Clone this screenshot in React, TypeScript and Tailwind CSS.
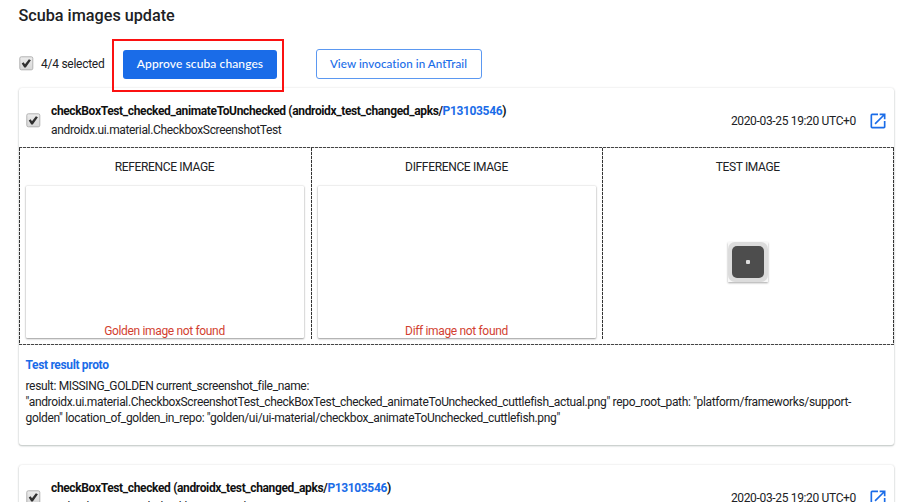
import React from "react";

function Checkbox() {
  return (
    <svg className="block h-[15px] w-[15px] shrink-0" viewBox="0 0 15 15">
      <defs>
        <linearGradient id="face" x1="0" y1="0" x2="0" y2="1">
          <stop offset="0" stopColor="#ececec" />
          <stop offset="1" stopColor="#d8d8d8" />
        </linearGradient>
      </defs>
      <rect x="0.8" y="0.8" width="13" height="13" rx="1.5" fill="url(#face)" stroke="#b2b2b2" />
      <path d="M2.7 7.6 L4.6 6.3 L6 8.2 L9.9 3.3 L11.9 4.3 L6.8 11.4 L5.3 11.4 Z" fill="#303030" />
    </svg>
  );
}

function OpenIcon() {
  return (
    <svg className="block h-5 w-5 shrink-0" viewBox="0 0 24 24" fill="#1a6ce8">
      <path d="M19 19H5V5h7V3H5a2 2 0 0 0-2 2v14a2 2 0 0 0 2 2h14c1.1 0 2-.9 2-2v-7h-2v7zM14 3v2h3.59l-9.83 9.83 1.41 1.41L19 6.41V10h2V3h-7z" />
    </svg>
  );
}

function CardHeader({ name }: { name: string }) {
  return (
    <div className="flex h-[59px] shrink-0 items-start">
      <div className="pl-[7px] pt-[25px]">
        <Checkbox />
      </div>
      <div className="pl-[10.5px] pt-[13px] leading-[20px] whitespace-nowrap">
        <div className="font-bold h-[19px] tracking-[-0.36px] text-[#111]">
          <span>{name} (androidx_test_changed_apks/</span>
          <span className="text-[#1a6ce8]">P13103546</span>
          <span>)</span>
        </div>
        <div>androidx.ui.material.CheckboxScreenshotTest</div>
      </div>
      <div className="ml-auto flex items-center gap-[12px] pr-[6px] pt-[23px]">
        <span className="leading-5 whitespace-nowrap">2020-03-25 19:20 UTC+0</span>
        <OpenIcon />
      </div>
    </div>
  );
}

const dashH = "h-px shrink-0 bg-[repeating-linear-gradient(90deg,#444_0_2.7px,#ddd_2.7px_4px)]";
const dashV = "w-px shrink-0 bg-[repeating-linear-gradient(180deg,#333_0_2.7px,#ddd_2.7px_4px)]";
const card =
  "ml-[18.5px] w-[875.5px] rounded-[3px] bg-white shadow-[0_1px_1px_#cdd2d0,0_1px_2px_rgba(60,64,67,0.25),0_0_2px_rgba(60,64,67,0.15)]";

function EmptyImage({ title, message }: { title: string; message: string }) {
  return (
    <div className="flex w-[290px] shrink-0 flex-col px-[6px]">
      <div className="h-[38px] pt-[9px] text-center leading-5">{title}</div>
      <div className="flex h-[152px] items-end justify-center rounded-[1px] shadow-[0_1px_2px_rgba(0,0,0,0.35),0_0_2px_rgba(0,0,0,0.2)]">
        <span className="leading-[14px] text-[#d23f31]">{message}</span>
      </div>
    </div>
  );
}

export default function App() {
  return (
    <div className="h-[502px] w-[902px] overflow-hidden bg-white font-['Roboto',sans-serif] text-[12px] tracking-[-0.34px] text-[#202124]">
      <h1 className="h-[38px] pl-[18.5px] pt-[4px] text-[16.2px] font-medium leading-6 tracking-normal">Scuba images update</h1>
      <div className="flex h-[50px] items-start pl-[19px]">
        <div className="pt-[18px]">
          <Checkbox />
        </div>
        <span className="w-[71px] pl-[7px] pt-[16px] leading-5 tracking-[-0.26px] whitespace-nowrap">4/4 selected</span>
        <div className="relative z-10 ml-[7px] mt-[0.5px] flex h-[53px] w-[172px] shrink-0 items-start border-2 border-[#fb1111] pl-[9px] pt-[9px]">
          <button className="h-[29px] w-[154px] rounded-[3px] bg-[#1a6ce8] font-['Lato',sans-serif] text-[12px] font-medium tracking-[0.1px] text-white whitespace-nowrap">
            Approve scuba changes
          </button>
        </div>
        <button className="ml-[31.5px] mt-[11px] h-[30px] w-[166px] rounded-[3px] border border-[#5b98f1] font-['Lato',sans-serif] text-[11.6px] font-medium tracking-[0.08px] text-[#1a6ce8] whitespace-nowrap">
          View invocation in AntTrail
        </button>
      </div>

      <section className={card + " flex h-[357px] flex-col"}>
        <CardHeader name="checkBoxTest_checked_animateToUnchecked" />
        <div className={dashH} />
        <div className="flex h-[196px]">
          <div className={dashV} />
          <EmptyImage title="REFERENCE IMAGE" message="Golden image not found" />
          <div className={dashV + " ml-px h-[191px]"} />
          <EmptyImage title="DIFFERENCE IMAGE" message="Diff image not found" />
          <div className={dashV + " h-[191px]"} />
          <div className="flex flex-1 flex-col items-center">
            <div className="h-[38px] pt-[9px] leading-5">TEST IMAGE</div>
            <div className="mt-[56px] flex h-[40px] w-[40px] items-center justify-center bg-[#f8f8f8] shadow-[0_1px_2px_rgba(0,0,0,0.35)]">
              <div className="flex h-[40px] w-[40px] items-center justify-center rounded-[7px] bg-[#dcdcdc]">
                <div className="flex h-[32px] w-[32px] items-center justify-center rounded-[5px] bg-[#4d4d4d]">
                  <div className="h-[4px] w-[4px] rounded-[1px] bg-[#ddd]" />
                </div>
              </div>
            </div>
          </div>
          <div className={dashV} />
        </div>
        <div className={dashH} />
        <div className="pl-[7px] pt-[10px] whitespace-nowrap">
          <div className="h-[23px] font-bold leading-5 text-[#1a6ce8]">Test result proto</div>
          <div className="leading-[16.2px]">
            <div>result: MISSING_GOLDEN current_screenshot_file_name:</div>
            <div>"androidx.ui.material.CheckboxScreenshotTest_checkBoxTest_checked_animateToUnchecked_cuttlefish_actual.png" repo_root_path: "platform/frameworks/support-</div>
            <div>golden" location_of_golden_in_repo: "golden/ui/ui-material/checkbox_animateToUnchecked_cuttlefish.png"</div>
          </div>
        </div>
      </section>

      <section className={card + " mt-[20px] h-[80px]"}>
        <CardHeader name="checkBoxTest_checked" />
      </section>
    </div>
  );
}
